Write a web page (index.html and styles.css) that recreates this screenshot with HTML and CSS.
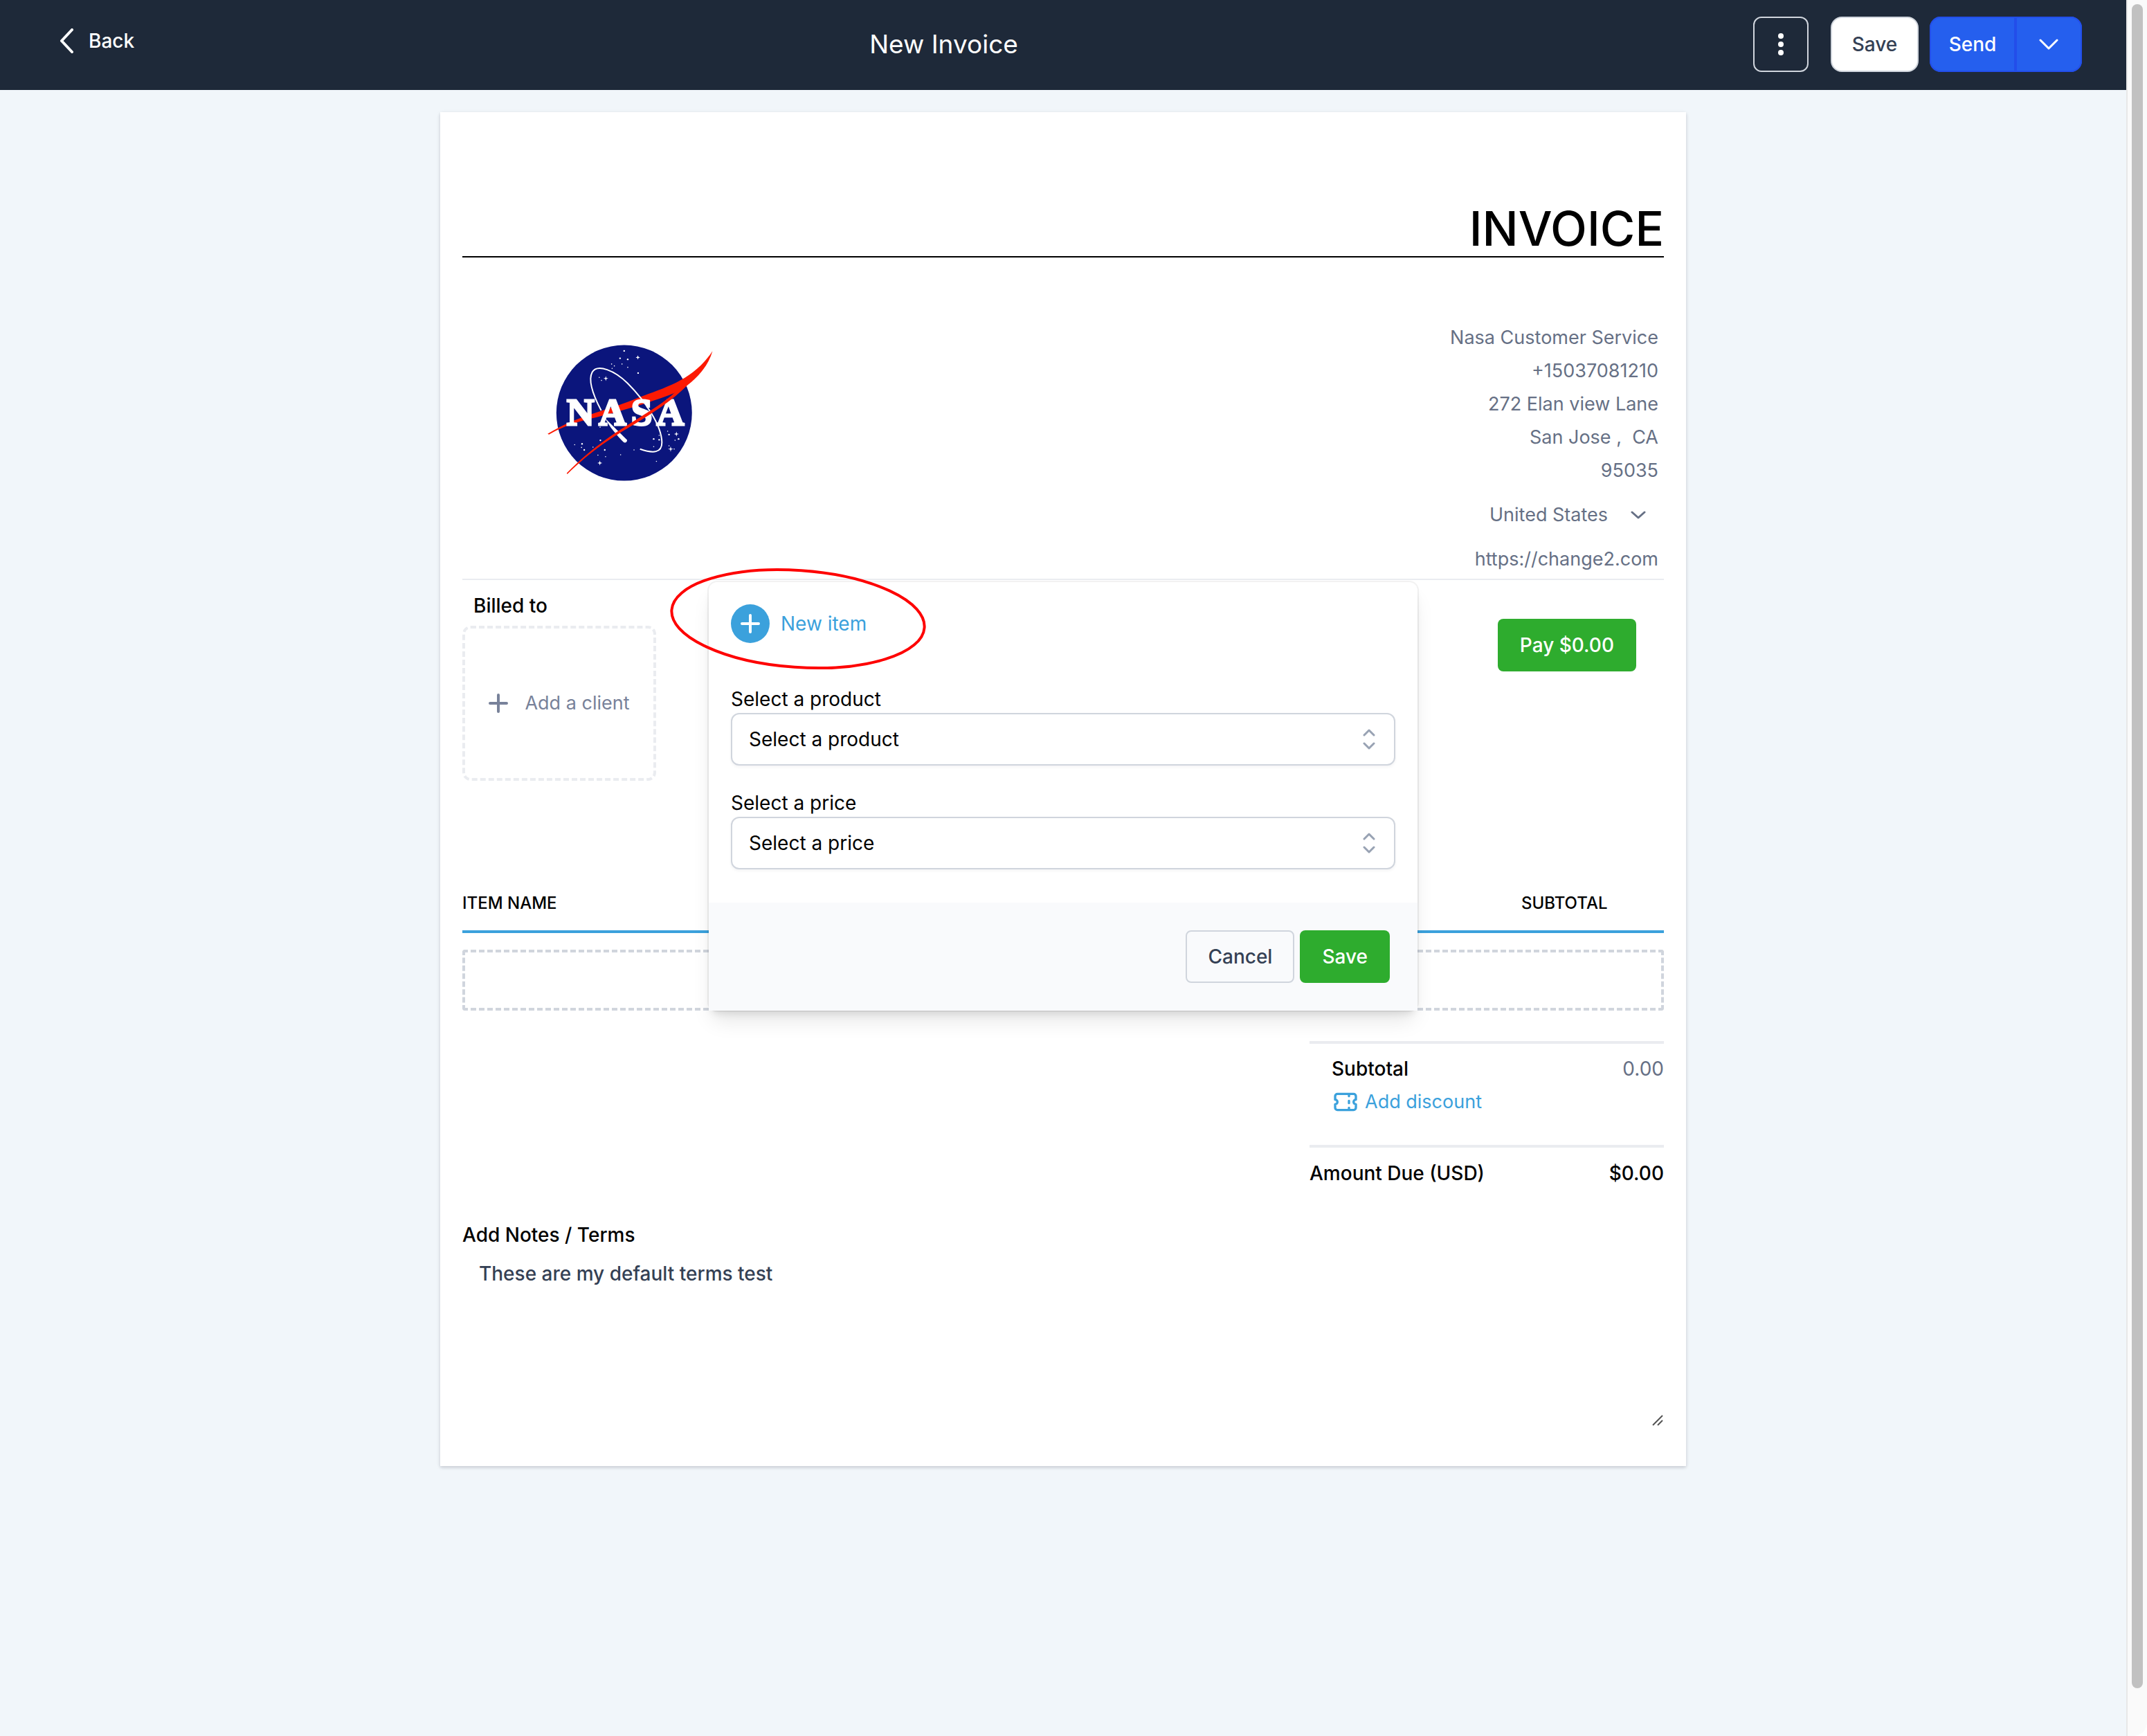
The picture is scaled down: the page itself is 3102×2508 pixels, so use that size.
FILE: index.html
```html
<!DOCTYPE html>
<html lang="en">
<head>
    <meta charset="UTF-8">
    <meta name="viewport" content="width=device-width, initial-scale=1.0">
    <title>New Invoice</title>
    <link rel="stylesheet" href="styles.css">
</head>
<body>
    <div class="page">
        <header class="topbar">
            <a class="back" href="#">
                <svg width="20" height="36" viewBox="0 0 20 36" fill="none" stroke="currentColor" stroke-width="4" stroke-linecap="round" stroke-linejoin="round"><path d="M18 2L3 18l15 16"/></svg>
                Back
            </a>
            <h1 class="page-title">New Invoice</h1>
            <div class="actions">
                <button class="more-btn" aria-label="More options">
                    <svg width="8" height="36" viewBox="0 0 8 36" fill="currentColor"><circle cx="4" cy="6" r="4"/><circle cx="4" cy="18" r="4"/><circle cx="4" cy="30" r="4"/></svg>
                </button>
                <button class="save-btn">Save</button>
                <div class="send-group">
                    <button class="send-btn">Send</button>
                    <button class="send-menu" aria-label="Send options">
                        <svg width="28" height="16" viewBox="0 0 28 16" fill="none" stroke="currentColor" stroke-width="3" stroke-linecap="round" stroke-linejoin="round"><path d="M2 2l12 12L26 2"/></svg>
                    </button>
                </div>
            </div>
        </header>

        <main class="paper">
            <h2 class="invoice-title">INVOICE</h2>

            <section class="company">
                <svg class="logo" width="241" height="202" viewBox="430 900 610 510">
                    <circle cx="713" cy="1154" r="248" fill="#0b157c"/>
                    <!-- stars -->
                    <g fill="#fff">
                        <circle cx="713" cy="927" r="3"/><circle cx="698" cy="954" r="3"/><circle cx="726" cy="958" r="3"/><circle cx="705" cy="975" r="2"/>
                        <circle cx="726" cy="987" r="2"/><circle cx="764" cy="1008" r="3"/><circle cx="667" cy="975" r="2"/><circle cx="677" cy="982" r="2"/><circle cx="669" cy="991" r="2"/>
                        <circle cx="622" cy="1024" r="2"/><circle cx="630" cy="1035" r="2"/><circle cx="625" cy="1206" r="2"/><circle cx="626" cy="1254" r="3"/>
                        <circle cx="532" cy="1270" r="2"/><circle cx="559" cy="1267" r="3"/><circle cx="557" cy="1280" r="2"/><circle cx="567" cy="1289" r="3"/>
                        <circle cx="599" cy="1279" r="2"/><circle cx="642" cy="1289" r="3"/><circle cx="617" cy="1308" r="2"/><circle cx="645" cy="1314" r="2"/>
                        <circle cx="700" cy="1307" r="2"/><circle cx="749" cy="1289" r="2"/><circle cx="831" cy="1331" r="2"/><circle cx="821" cy="1249" r="3"/>
                        <circle cx="841" cy="1236" r="2"/><circle cx="841" cy="1252" r="3"/><circle cx="821" cy="1277" r="2"/><circle cx="872" cy="1221" r="2"/>
                        <circle cx="877" cy="1233" r="3"/><circle cx="912" cy="1249" r="3"/><circle cx="899" cy="1254" r="2"/><circle cx="877" cy="1274" r="2"/><circle cx="896" cy="1286" r="2"/>
                        <path d="M763 943l2 6 6 2-6 2-2 6-2-6-6-2 6-2zM646 1019l2 7 7 2-7 2-2 7-2-7-7-2 7-2zM904 1222l2 7 7 2-7 2-2 7-2-7-7-2 7-2zM883 1276l2 8 8 2-8 2-2 8-2-8-8-2 8-2zM624 1328l2 7 7 2-7 2-2 7-2-7-7-2 7-2z"/>
                    </g>
                    <path d="M433 1230C540 1165 640 1148 745 1106C860 1060 960 1040 1036 928C1015 1000 955 1050 905 1078C830 1108 745 1135 650 1160C560 1182 500 1196 438 1233Z" fill="#fc1a03"/>
                    <path d="M629 1145C600 1090 580 1035 596 1005C615 972 680 1000 725 1045C790 1110 850 1200 851 1262C851 1300 820 1303 771 1286" fill="none" stroke="#fff" stroke-width="5"/>
                    <path d="M642 1172L724 1253C723 1262 716 1265 710 1260C685 1235 660 1205 642 1172Z" fill="#fff"/>
                    <g class="logo-text">
                        <text x="503" y="1199">N</text>
                        <text x="620" y="1199">A</text>
                        <text x="738" y="1199">S</text>
                        <text x="831" y="1199">A</text>
                    </g>
                    <path d="M503 1374C600 1275 690 1220 770 1170C830 1133 880 1100 918 1060L945 1052C885 1112 820 1152 752 1194C670 1242 590 1293 505 1378Z" fill="#fc1a03"/>
                </svg>
                <address class="company-info">
                    <span>Nasa Customer Service</span>
                    <span>+15037081210</span>
                    <span>272 Elan view Lane</span>
                    <span>San Jose ,&nbsp; CA</span>
                    <span>95035</span>
                    <div class="country">
                        <select aria-label="Country">
                            <option>United States</option>
                        </select>
                        <svg width="22" height="14" viewBox="0 0 22 14" fill="none" stroke="currentColor" stroke-width="3" stroke-linecap="round" stroke-linejoin="round"><path d="M2 3l9 8 9-8"/></svg>
                    </div>
                    <a href="https://change2.com">https://change2.com</a>
                </address>
            </section>

            <section class="billing">
                <div>
                    <h3 class="billed-title">Billed to</h3>
                    <button class="add-client">
                        <svg width="28" height="28" viewBox="0 0 28 28" stroke="currentColor" stroke-width="4" stroke-linecap="round"><path d="M14 2v24M2 14h24"/></svg>
                        Add a client
                    </button>
                </div>
                <button class="green-btn pay-btn">Pay $0.00</button>
            </section>

            <table class="items">
                <thead>
                    <tr>
                        <th>ITEM NAME</th>
                        <th class="col-subtotal">SUBTOTAL</th>
                    </tr>
                </thead>
            </table>
            <div class="item-drop"></div>

            <section class="totals">
                <div class="totals-block">
                    <div class="total-row">
                        <strong>Subtotal</strong>
                        <span class="muted">0.00</span>
                    </div>
                    <button class="discount">
                        <svg width="40" height="40" viewBox="0 0 24 24" fill="none" stroke="currentColor" stroke-width="2" stroke-linecap="round" stroke-linejoin="round"><path d="M15 5v2m0 4v2m0 4v2M5 5a2 2 0 00-2 2v3a2 2 0 110 4v3a2 2 0 002 2h14a2 2 0 002-2v-3a2 2 0 110-4V7a2 2 0 00-2-2H5z"/></svg>
                        Add discount
                    </button>
                </div>
                <div class="total-row amount-due">
                    <strong>Amount Due (USD)</strong>
                    <strong>$0.00</strong>
                </div>
            </section>

            <label class="notes-label" for="notes">Add Notes / Terms</label>
            <div class="notes-box">
                <textarea class="notes" id="notes">These are my default terms test</textarea>
                <svg class="grip" width="16" height="16" viewBox="0 0 16 16" stroke="#555" stroke-width="2"><path d="M1 15L15 1M8 15l7-7"/></svg>
            </div>

            <!-- New item popover -->
            <form class="popover">
                <div class="popover-body">
                    <button type="button" class="new-item">
                        <span class="plus">
                            <svg width="28" height="28" viewBox="0 0 28 28" stroke="currentColor" stroke-width="4" stroke-linecap="round"><path d="M14 2v24M2 14h24"/></svg>
                        </span>
                        New item
                    </button>

                    <div class="field">
                        <label for="product">Select a product</label>
                        <div class="select-box">
                            <select id="product">
                                <option>Select a product</option>
                            </select>
                            <svg width="18" height="30" viewBox="0 0 18 30" fill="none" stroke="currentColor" stroke-width="3" stroke-linecap="round" stroke-linejoin="round"><path d="M2 9l7-7 7 7M2 21l7 7 7-7"/></svg>
                        </div>
                    </div>

                    <div class="field">
                        <label for="price">Select a price</label>
                        <div class="select-box">
                            <select id="price">
                                <option>Select a price</option>
                            </select>
                            <svg width="18" height="30" viewBox="0 0 18 30" fill="none" stroke="currentColor" stroke-width="3" stroke-linecap="round" stroke-linejoin="round"><path d="M2 9l7-7 7 7M2 21l7 7 7-7"/></svg>
                        </div>
                    </div>
                </div>
                <div class="popover-footer">
                    <button type="button" class="cancel-btn">Cancel</button>
                    <button type="button" class="green-btn">Save</button>
                </div>
                <svg class="highlight" width="374" height="150" viewBox="0 0 374 150"><ellipse cx="187" cy="75" rx="183" ry="70" transform="rotate(4 187 75)" fill="none" stroke="#fe0000" stroke-width="4"/></svg>
            </form>
        </main>
    </div>
    <div class="scrollbar"><div class="thumb"></div></div>
</body>
</html>
```
FILE: styles.css
```css
* {
    box-sizing: border-box;
}

body {
    margin: 0;
    min-height: 100vh;
    display: flex;
    background: #fff;
    color: #000;
    font-family: Inter, "Liberation Sans", sans-serif;
    font-size: 28px;
    line-height: 48px;
}

h1, h2, h3 {
    margin: 0;
    font-weight: 500;
}

button, select, textarea {
    font: inherit;
    color: inherit;
    margin: 0;
}

button {
    display: flex;
    align-items: center;
    justify-content: center;
    padding: 0;
    background: none;
    border: none;
    cursor: pointer;
}

a {
    color: inherit;
    text-decoration: none;
}

strong {
    font-weight: 500;
}

.page {
    flex: 1;
    background: #f1f6fa;
}

/* top bar */
.topbar {
    display: flex;
    align-items: center;
    justify-content: space-between;
    height: 130px;
    padding: 0 64px 2px 86px;
    background: #1e2939;
    color: #fff;
}

.back {
    display: flex;
    align-items: center;
    gap: 22px;
    padding-bottom: 10px;
    font-weight: 500;
}

.page-title {
    font-size: 37px;
    font-weight: 400;
}

.actions {
    display: flex;
    font-weight: 500;
}

.actions button {
    height: 80px;
    font-weight: 500;
}

.actions .more-btn {
    width: 80px;
    margin-right: 32px;
    border: 2px solid #d0d5dd;
    border-radius: 12px;
}

.actions .save-btn {
    width: 127px;
    margin-right: 16px;
    background: #fff;
    border: 2px solid #d0d5dd;
    border-radius: 16px;
    color: #344054;
}

.send-group {
    display: flex;
    background: #255fee;
    border-radius: 16px;
}

.send-group .send-btn {
    width: 124px;
    border: 2px solid #234eea;
    border-radius: 16px 0 0 16px;
}

.send-group .send-menu {
    width: 96px;
    border: 2px solid #234eea;
    border-radius: 0 16px 16px 0;
}

/* invoice sheet */
.paper {
    position: relative;
    max-width: 1800px;
    margin: 32px auto;
    padding: 128px 32px 56px;
    background: #fff;
    box-shadow: 0 2px 6px rgba(16, 24, 40, 0.1), 0 2px 4px rgba(16, 24, 40, 0.1);
}

.invoice-title {
    font-size: 69px;
    line-height: 80px;
    text-align: right;
    border-bottom: 2px solid #000;
}

.company {
    display: flex;
    align-items: flex-start;
    justify-content: space-between;
    padding: 92px 8px 4px 122px;
    border-bottom: 2px solid #eaecf0;
    color: #667085;
}

.logo {
    margin-top: 32px;
}

.logo-text {
    font-family: "Liberation Serif", serif;
    font-size: 140px;
    font-weight: 700;
    fill: #fff;
    stroke: #fff;
    stroke-width: 7;
}

.company-info {
    display: flex;
    flex-direction: column;
    align-items: flex-end;
    font-size: 27px;
    font-style: normal;
}

.country {
    display: flex;
    align-items: center;
    gap: 32px;
    margin: 16px 0;
    padding-right: 18px;
}

.country select {
    height: 48px;
    padding: 0;
    background: none;
    border: none;
    appearance: none;
}

.billing {
    display: flex;
    align-items: flex-start;
    justify-content: space-between;
    padding-top: 16px;
}

.billed-title {
    margin-bottom: 8px;
    padding-left: 16px;
    font-size: 28px;
    line-height: 42px;
}

.add-client {
    gap: 24px;
    width: 280px;
    height: 224px;
    border: 4px dashed #eaecf0;
    border-radius: 12px;
    color: #78829a;
    font-size: 27px;
}

.green-btn {
    height: 76px;
    padding: 0 32px;
    background: #2eac2e;
    border-radius: 8px;
    color: #fff;
    font-weight: 500;
}

.pay-btn {
    margin: 40px 40px 0 0;
}

.items {
    width: 100%;
    margin-top: 160px;
    border-collapse: separate;
    border-spacing: 0;
}

.items th {
    padding: 1px 0 23px;
    border-bottom: 4px solid #3ba1dc;
    font-size: 24px;
    font-weight: 500;
    line-height: 32px;
    text-align: left;
}

.items .col-subtotal {
    width: 206px;
}

.item-drop {
    height: 88px;
    margin-top: 24px;
    border: 4px dashed #d0d5dd;
    border-radius: 4px;
}

.totals {
    width: 512px;
    margin: 44px 0 0 auto;
}

.totals-block {
    padding: 12px 0 38px 32px;
    border-top: 4px solid #eaecf0;
}

.total-row {
    display: flex;
    justify-content: space-between;
}

.amount-due {
    padding-top: 13px;
    border-top: 4px solid #eaecf0;
}

.muted {
    color: #667085;
}

.discount {
    gap: 8px;
    height: 48px;
    color: #3ba1dc;
    font-size: 27px;
}

.notes-label {
    display: block;
    margin-top: 41px;
    font-weight: 500;
}

.notes-box {
    position: relative;
}

.notes {
    display: block;
    width: 100%;
    height: 254px;
    padding: 8px 24px;
    border: none;
    outline: none;
    background: none;
    color: #344054;
    font-weight: 500;
    resize: vertical;
}

.notes::-webkit-resizer {
    display: none;
}

.grip {
    position: absolute;
    right: 1px;
    bottom: 2px;
    pointer-events: none;
}

/* popover over the item table */
.popover {
    position: absolute;
    top: 679px;
    left: 50%;
    width: 1024px;
    margin-left: -512px;
    background: #fff;
    border-radius: 12px;
    box-shadow: 0 0 0 2px rgba(0, 0, 0, 0.05), 0 20px 30px -6px rgba(0, 0, 0, 0.1), 0 8px 12px -4px rgba(0, 0, 0, 0.1);
}

.popover-body {
    display: flex;
    flex-direction: column;
    gap: 34px;
    padding: 32px 32px 48px;
}

.new-item {
    align-self: flex-start;
    gap: 16px;
    margin-bottom: 27px;
    color: #3ba1dc;
}

.plus {
    display: flex;
    align-items: center;
    justify-content: center;
    width: 56px;
    height: 56px;
    background: #3ba1dc;
    border-radius: 50%;
    color: #fff;
}

.field label {
    display: block;
    line-height: 40px;
}

.select-box {
    display: grid;
    align-items: center;
    color: #98a2b3;
}

.select-box select {
    grid-area: 1 / 1;
    width: 100%;
    height: 76px;
    padding: 0 24px;
    background: #fff;
    border: 2px solid #d0d5dd;
    border-radius: 12px;
    box-shadow: 0 2px 4px rgba(16, 24, 40, 0.05);
    color: #000;
    appearance: none;
}

.select-box svg {
    grid-area: 1 / 1;
    justify-self: end;
    margin-right: 29px;
    pointer-events: none;
}

.popover-footer {
    display: flex;
    justify-content: flex-end;
    gap: 8px;
    padding: 40px;
    background: #f9fafc;
}

.cancel-btn {
    height: 76px;
    padding: 0 30px;
    border: 2px solid #d0d5dd;
    border-radius: 8px;
    color: #344054;
    font-weight: 500;
}

.highlight {
    position: absolute;
    top: -22px;
    left: -58px;
    pointer-events: none;
}

/* scrollbar track */
.scrollbar {
    width: 30px;
    padding: 6px 6px 0;
    background: #fafafa;
    border-left: 2px solid #e8e8e8;
    border-radius: 0 0 20px 0;
}

.thumb {
    width: 16px;
    height: 97vh;
    background: #c1c1c1;
    border-radius: 8px;
}
```
